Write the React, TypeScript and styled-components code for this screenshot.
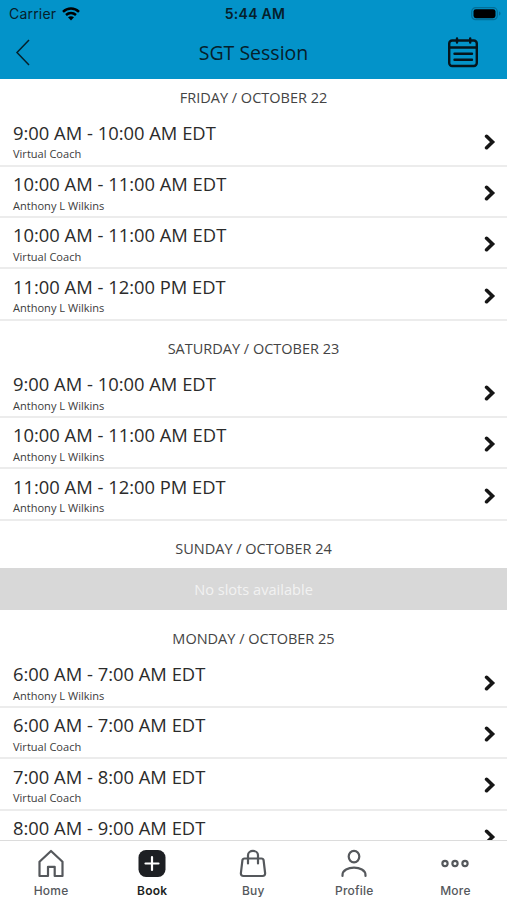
import React from 'react';
import styled, { createGlobalStyle } from 'styled-components';

const GlobalStyle = createGlobalStyle`
  *, *::before, *::after { box-sizing: border-box; }
  body { margin: 0; background: #fff; overflow: hidden; }
`;

const Screen = styled.div`
  display: flex;
  flex-direction: column;
  width: 507px;
  height: 900px;
  overflow: hidden;
  background: #fff;
  font-family: 'Open Sans', sans-serif;
  color: #2b2b2b;
`;

const Header = styled.header`
  flex: none;
  height: 79px;
  background: #0393c9;
  color: #06202b;
`;

const StatusBar = styled.div`
  display: grid;
  grid-template-columns: 1fr auto 1fr;
  align-items: center;
  height: 27px;
  padding: 0 6px 0 9px;
  font-family: Inter, sans-serif;
  font-size: 14px;
  line-height: 27px;
`;

const Carrier = styled.span`
  display: flex;
  align-items: center;
  gap: 6px;
  letter-spacing: 0.2px;
`;

const Clock = styled.span`
  font-weight: 600;
  letter-spacing: 0.3px;
`;

const BatterySlot = styled.span`
  display: flex;
  justify-content: flex-end;
`;

const NavBar = styled.div`
  display: grid;
  grid-template-columns: 80px 1fr 80px;
  align-items: center;
  height: 51px;
`;

const NavButton = styled.button<{ $side: 'left' | 'right' }>`
  display: flex;
  justify-content: ${(p) => (p.$side === 'left' ? 'flex-start' : 'flex-end')};
  padding: ${(p) => (p.$side === 'left' ? '0 0 0 15px' : '0 28px 2px 0')};
  border: 0;
  background: none;
  color: inherit;
`;

const Title = styled.h1`
  margin: 0;
  text-align: center;
  font-size: 19.5px;
  font-weight: 400;
  line-height: 28px;
`;

const Schedule = styled.main`
  flex: 1;
  min-height: 0;
  overflow: hidden;
`;

const DayHeading = styled.h2<{ $first?: boolean }>`
  display: flex;
  align-items: flex-end;
  justify-content: center;
  height: ${(p) => (p.$first ? 36.4 : 46.1)}px;
  margin: 0;
  padding-bottom: 7.6px;
  font-size: 14.5px;
  font-weight: 400;
  line-height: 20px;
  color: #444;
`;

const SlotRow = styled.div`
  display: flex;
  align-items: center;
  justify-content: space-between;
  height: 51.33px;
  padding: 3px 11px 0 13px;
  border-bottom: 2px solid #ececec;
`;

const SlotText = styled.div`
  display: flex;
  flex-direction: column;
`;

const SlotTime = styled.span`
  margin-bottom: 2px;
  font-size: 18.38px;
  line-height: 23.6px;
  white-space: nowrap;
`;

const SlotCoach = styled.span`
  font-size: 11.05px;
  line-height: 16px;
  color: #3c3c3c;
`;

const EmptyDay = styled.div`
  display: flex;
  align-items: center;
  justify-content: center;
  height: 42.4px;
  margin-top: 1.2px;
  background: #d8d8d8;
  color: #f2f2f2;
  font-size: 14.6px;
`;

const TabBar = styled.nav`
  display: grid;
  grid-template-columns: repeat(5, 1fr);
  flex: none;
  height: 60px;
  padding-right: 1.5px;
  border-top: 1px solid #dcdcdc;
  background: #fff;
`;

const Tab = styled.a<{ $active?: boolean }>`
  display: flex;
  flex-direction: column;
  align-items: center;
  padding: 7px 0 0 1px;
  gap: 5px;
  font-family: Inter, sans-serif;
  font-size: 12px;
  font-weight: ${(p) => (p.$active ? 600 : 500)};
  line-height: 16px;
  letter-spacing: 0.2px;
  color: ${(p) => (p.$active ? '#1d1f23' : '#55585c')};
`;

const WifiIcon = () => (
  <svg width="18" height="14" viewBox="0 0 18 14" fill="none" stroke="#000" strokeWidth="2.5">
    <path d="M1 4.800C5.500.5 12.500.5 17 4.800" />
    <path d="M4 8C7 5.400 11 5.400 14 8" />
    <path d="M9 13.400 6 10.300C7.800 8.900 10.200 8.900 12 10.300Z" fill="#000" stroke="none" />
  </svg>
);

const BatteryIcon = () => (
  <svg width="30" height="14" viewBox="0 0 30 14">
    <rect x=".7" y=".7" width="25.600" height="12" rx="4" fill="none" stroke="#036f98" strokeWidth="1.200" />
    <rect x="2.500" y="2.200" width="22" height="9" rx="2.400" fill="#000" />
    <path d="M28 4.500v4c1-.3 1.500-1 1.500-2S29 4.800 28 4.500Z" fill="#036f98" />
  </svg>
);

const BackIcon = () => (
  <svg width="16" height="28" viewBox="0 0 16 28" fill="none" stroke="#06202b" strokeWidth="1.500">
    <path d="M14 1 2 13.500 14 26" />
  </svg>
);

const CalendarIcon = () => (
  <svg width="32" height="32" viewBox="0 0 32 32" fill="none" stroke="#06141b" strokeWidth="2.400" strokeLinecap="round">
    <rect x="2.200" y="4.500" width="27.600" height="25.500" rx="3" />
    <path d="M2.200 11.500h27.600M10 2.500v4M23.200 2.500v4M7.500 17.800h17.500M7.500 23.800h17.500" />
  </svg>
);

const ChevronIcon = () => (
  <svg width="12" height="16" viewBox="0 0 12 16" fill="none" stroke="#161616" strokeWidth="3.600" strokeLinecap="round">
    <path d="M2.600 2.300 8.500 8 2.600 13.700" />
  </svg>
);

const HomeIcon = () => (
  <svg width="28" height="30" viewBox="0 0 28 30" fill="none" stroke="currentColor" strokeWidth="2.200" strokeLinejoin="round">
    <path d="M2.500 28V13.800L14 3l11.500 10.800V28h-7.800v-9.200H11V28Z" />
  </svg>
);

const BookIcon = () => (
  <svg width="28" height="30" viewBox="0 0 28 30">
    <rect x=".5" y="2" width="27" height="27" rx="7.500" fill="#1d1f23" />
    <path d="M14 9v13M7.500 15.500h13" stroke="#fff" strokeWidth="2.200" strokeLinecap="round" />
  </svg>
);

const BuyIcon = () => (
  <svg width="28" height="30" viewBox="0 0 28 30" fill="none" stroke="currentColor" strokeWidth="2.200" strokeLinecap="round" strokeLinejoin="round">
    <path d="M5.500 10.500h17c1.300 0 1.900.6 2.100 1.800l1.500 12.700c.2 1.900-.8 3-2.600 3H4.500c-1.800 0-2.800-1.100-2.600-3l1.500-12.700c.2-1.200.8-1.800 2.100-1.800Z" />
    <path d="M9 15.500V7.300C9 1.500 19 1.500 19 7.300v8.200" />
  </svg>
);

const ProfileIcon = () => (
  <svg width="28" height="30" viewBox="0 0 28 30" fill="none" stroke="currentColor" strokeWidth="2.200" strokeLinecap="round">
    <ellipse cx="14" cy="8.600" rx="5.300" ry="5.800" />
    <path d="M2.500 28v-.8C2.500 17.200 25.500 17.200 25.500 27.200v.8" />
  </svg>
);

const MoreIcon = () => (
  <svg width="28" height="30" viewBox="0 0 28 30" fill="none" stroke="currentColor" strokeWidth="2.200">
    <circle cx="4" cy="15.500" r="2.600" />
    <circle cx="14" cy="15.500" r="2.600" />
    <circle cx="24" cy="15.500" r="2.600" />
  </svg>
);

const VC = 'Virtual Coach';
const AW = 'Anthony L Wilkins';

const days: { label: string; slots: [string, string][] }[] = [
  {
    label: 'FRIDAY / OCTOBER 22',
    slots: [
      ['9:00 AM - 10:00 AM EDT', VC],
      ['10:00 AM - 11:00 AM EDT', AW],
      ['10:00 AM - 11:00 AM EDT', VC],
      ['11:00 AM - 12:00 PM EDT', AW],
    ],
  },
  {
    label: 'SATURDAY / OCTOBER 23',
    slots: [
      ['9:00 AM - 10:00 AM EDT', AW],
      ['10:00 AM - 11:00 AM EDT', AW],
      ['11:00 AM - 12:00 PM EDT', AW],
    ],
  },
  { label: 'SUNDAY / OCTOBER 24', slots: [] },
  {
    label: 'MONDAY / OCTOBER 25',
    slots: [
      ['6:00 AM - 7:00 AM EDT', AW],
      ['6:00 AM - 7:00 AM EDT', VC],
      ['7:00 AM - 8:00 AM EDT', VC],
      ['8:00 AM - 9:00 AM EDT', ''],
    ],
  },
];

const tabs = [
  { label: 'Home', Icon: HomeIcon },
  { label: 'Book', Icon: BookIcon, active: true },
  { label: 'Buy', Icon: BuyIcon },
  { label: 'Profile', Icon: ProfileIcon },
  { label: 'More', Icon: MoreIcon },
];

const Coach = ({ name }: { name: string }) => <SlotCoach>{name || '\u00a0'}</SlotCoach>;

export default function App() {
  return (
    <>
      <GlobalStyle />
      <Screen>
        <Header>
          <StatusBar>
            <Carrier>
              Carrier
              <WifiIcon />
            </Carrier>
            <Clock>5:44 AM</Clock>
            <BatterySlot>
              <BatteryIcon />
            </BatterySlot>
          </StatusBar>
          <NavBar>
            <NavButton $side="left" aria-label="Back">
              <BackIcon />
            </NavButton>
            <Title>SGT Session</Title>
            <NavButton $side="right" aria-label="Calendar">
              <CalendarIcon />
            </NavButton>
          </NavBar>
        </Header>
        <Schedule>
          {days.map((day, i) => (
            <section key={day.label}>
              <DayHeading $first={i === 0}>{day.label}</DayHeading>
              {day.slots.length === 0 && <EmptyDay>No slots available</EmptyDay>}
              {day.slots.map(([time, coach], j) => (
                <SlotRow key={j}>
                  <SlotText>
                    <SlotTime>{time}</SlotTime>
                    <Coach name={coach} />
                  </SlotText>
                  <ChevronIcon />
                </SlotRow>
              ))}
            </section>
          ))}
        </Schedule>
        <TabBar>
          {tabs.map(({ label, Icon, active }) => (
            <Tab key={label} $active={active}>
              <Icon />
              {label}
            </Tab>
          ))}
        </TabBar>
      </Screen>
    </>
  );
}
